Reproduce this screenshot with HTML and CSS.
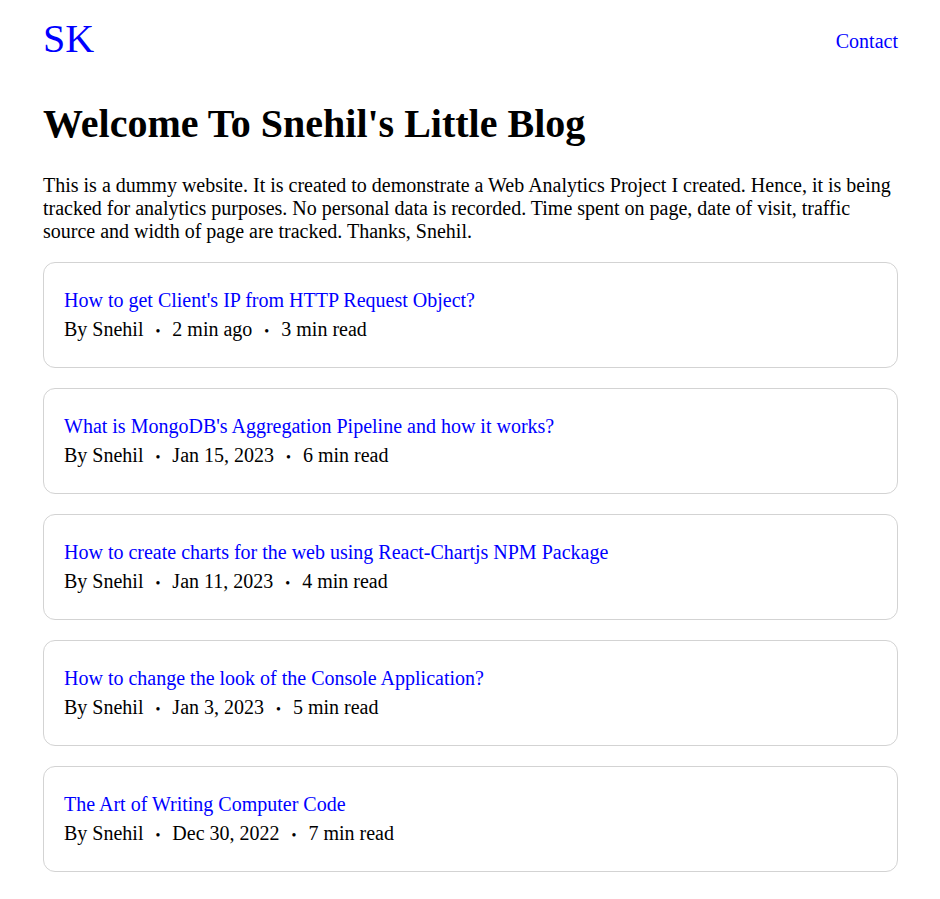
FILE: index.html
```html
<!DOCTYPE html>
<html lang="en">
<head>
<meta charset="utf-8">
<title>Snehil's Little Blog</title>
<link rel="stylesheet" href="styles.css">
</head>
<body>
<div class="page">
  <header class="header">
    <a class="logo" href="#">SK</a>
    <a class="nav-link" href="#">Contact</a>
  </header>
  <h1 class="title">Welcome To Snehil's Little Blog</h1>
  <p class="intro">This is a dummy website. It is created to demonstrate a Web Analytics Project I created. Hence, it is being tracked for analytics purposes. No personal data is recorded. Time spent on page, date of visit, traffic source and width of page are tracked. Thanks, Snehil.</p>
  <div class="posts">
    <article class="card">
      <a class="card-title" href="#">How to get Client's IP from HTTP Request Object?</a>
      <div class="meta"><span>By Snehil</span><span class="dot">•</span><span>2 min ago</span><span class="dot">•</span><span>3 min read</span></div>
    </article>
    <article class="card">
      <a class="card-title" href="#">What is MongoDB's Aggregation Pipeline and how it works?</a>
      <div class="meta"><span>By Snehil</span><span class="dot">•</span><span>Jan 15, 2023</span><span class="dot">•</span><span>6 min read</span></div>
    </article>
    <article class="card">
      <a class="card-title" href="#">How to create charts for the web using React-Chartjs NPM Package</a>
      <div class="meta"><span>By Snehil</span><span class="dot">•</span><span>Jan 11, 2023</span><span class="dot">•</span><span>4 min read</span></div>
    </article>
    <article class="card">
      <a class="card-title" href="#">How to change the look of the Console Application?</a>
      <div class="meta"><span>By Snehil</span><span class="dot">•</span><span>Jan 3, 2023</span><span class="dot">•</span><span>5 min read</span></div>
    </article>
    <article class="card">
      <a class="card-title" href="#">The Art of Writing Computer Code</a>
      <div class="meta"><span>By Snehil</span><span class="dot">•</span><span>Dec 30, 2022</span><span class="dot">•</span><span>7 min read</span></div>
    </article>
  </div>
</div>
</body>
</html>
```

FILE: styles.css
```css
html, body {
  margin: 0;
  padding: 0;
  background: #ffffff;
}
body {
  font-family: "Liberation Serif", "Times New Roman", serif;
  color: #000000;
}
.page {
  padding: 16px 42px 40px 43px;
}
.header {
  display: flex;
  justify-content: space-between;
  align-items: center;
}
.logo {
  color: #0000ff;
  text-decoration: none;
  font-size: 40px;
  line-height: 46px;
}
.nav-link {
  color: #0000ff;
  text-decoration: none;
  font-size: 20px;
  line-height: 23px;
  padding-top: 4px;
}
.title {
  font-size: 40px;
  font-weight: bold;
  margin: 39px 0 27px;
  line-height: 46px;
}
.intro {
  font-size: 20px;
  line-height: 23px;
  margin: 0 0 19px;
}
.posts {
  display: flex;
  flex-direction: column;
  gap: 20px;
}
.card {
  border: 1px solid #d3d3d3;
  border-radius: 12px;
  padding: 26px 20px;
  display: flex;
  flex-direction: column;
  gap: 6px;
}
.card-title {
  color: #0000ff;
  text-decoration: none;
  font-size: 20px;
  line-height: 23px;
}
.meta {
  font-size: 20px;
  line-height: 23px;
  height: 23px;
  display: flex;
  align-items: baseline;
}
.dot {
  font-size: 14px;
  line-height: 1;
  margin: 0 12px;
}
```
